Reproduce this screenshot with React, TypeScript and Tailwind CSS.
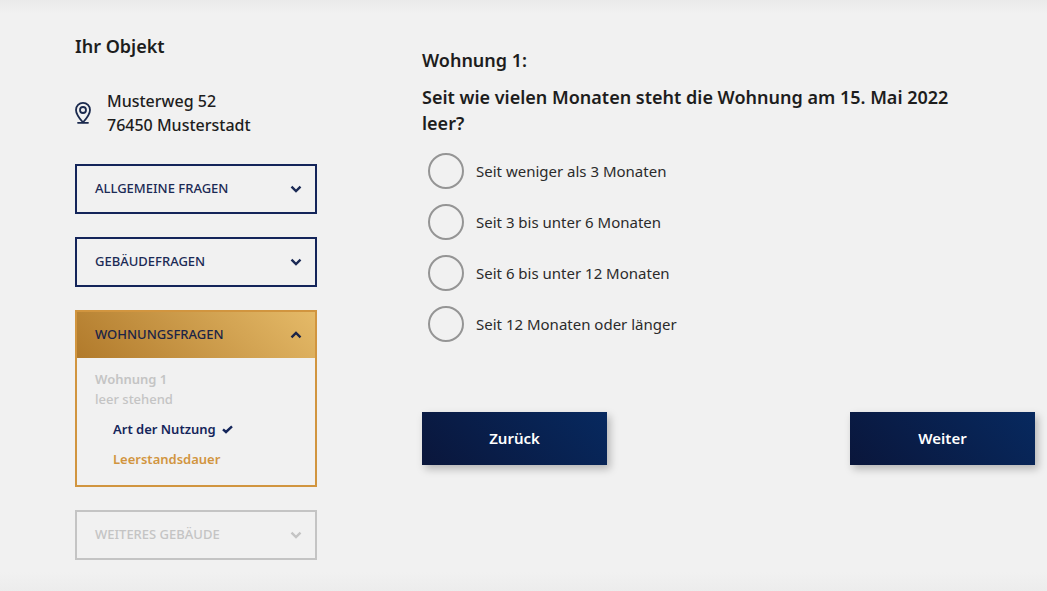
import { useState } from 'react';

const sections = [
  { id: 'allgemein', title: 'Allgemeine Fragen' },
  { id: 'gebaeude', title: 'Gebäudefragen' },
  { id: 'wohnung', title: 'Wohnungsfragen' },
  { id: 'weiteres', title: 'Weiteres Gebäude', disabled: true },
];

const options = [
  { value: '0-3', label: 'Seit weniger als 3 Monaten' },
  { value: '3-6', label: 'Seit 3 bis unter 6 Monaten' },
  { value: '6-12', label: 'Seit 6 bis unter 12 Monaten' },
  { value: '12+', label: 'Seit 12 Monaten oder länger' },
];

function Chevron({ up }: { up?: boolean }) {
  return (
    <svg width="12" height="8" viewBox="0 0 12 8" fill="none" stroke="currentColor" strokeWidth="2.4" aria-hidden="true">
      <path d={up ? 'M1.5 6.3 6 1.9l4.5 4.4' : 'M1.5 1.7 6 6.1l4.5-4.4'} />
    </svg>
  );
}

function PinIcon() {
  return (
    <svg width="16" height="22" viewBox="0 0 16 22" fill="none" stroke="#1b2a4e" strokeWidth="1.8" strokeLinecap="round" strokeLinejoin="round" aria-hidden="true">
      <path d="M8 20.4C5.2 17.200 1 12.600 1 7.900a7 7 0 0 1 14 0c0 4.700-4.200 9.300-7 12.500Z" />
      <circle cx="8" cy="8" r="3" />
      <path d="M3 20.800h10" />
    </svg>
  );
}

function CheckIcon() {
  return (
    <svg width="11" height="9" viewBox="0 0 11 9" fill="none" stroke="currentColor" strokeWidth="2.4" aria-hidden="true">
      <path d="M1 4.300 4 7 10 1.400" />
    </svg>
  );
}

function NavButton({ label }: { label: string }) {
  return (
    <button
      type="button"
      className="h-[53px] w-[185px] bg-[linear-gradient(45deg,#0a163b,#07295f)] text-[15px] font-semibold text-white shadow-[3px_4px_8px_rgba(0,0,0,0.25)]"
    >
      {label}
    </button>
  );
}

export default function App() {
  const [open, setOpen] = useState('wohnung');
  const [answer, setAnswer] = useState('');

  return (
    <div className="flex min-h-screen gap-[105px] bg-[linear-gradient(to_bottom,#eaeaea,#f1f1f1_14px,#f1f1f1_calc(100%-20px),#ececec)] pr-3 pb-8 pl-[75px] font-['Noto_Sans',sans-serif] text-[#1d1d1d]">
      <aside className="w-[242px] shrink-0 pt-8">
        <h2 className="text-[18px] leading-7 font-semibold">Ihr Objekt</h2>

        <div className="mt-[29px] flex items-center gap-4">
          <PinIcon />
          <address className="text-[16px] leading-6 font-medium not-italic">
            Musterweg 52
            <br />
            76450 Musterstadt
          </address>
        </div>

        <nav className="mt-[27px] flex flex-col gap-[23px]">
          {sections.map((section) => {
            const active = section.id === open;
            return (
              <div
                key={section.id}
                className={`border-2 ${active ? 'border-[#d1953f]' : section.disabled ? 'border-[#c4c4c4]' : 'border-[#14255a]'}`}
              >
                <button
                  type="button"
                  disabled={section.disabled}
                  aria-expanded={active}
                  onClick={() => setOpen(active ? '' : section.id)}
                  className={`flex h-[46px] w-full items-center justify-between pr-[13px] pl-[18px] text-[13px] font-medium uppercase ${
                    active
                      ? 'bg-[linear-gradient(45deg,#b17a2b,#e5ba68)] text-[#1b2447]'
                      : section.disabled
                        ? 'text-[#c4c4c4]'
                        : 'text-[#1b2a55]'
                  }`}
                >
                  {section.title}
                  <Chevron up={active} />
                </button>

                {active && section.id === 'wohnung' && (
                  <div className="px-[18px] pt-[11px] pb-4 text-[13px] leading-5">
                    <p className="font-medium text-[#c4c4c4]">
                      <span className="font-semibold">Wohnung 1</span>
                      <br />
                      leer stehend
                    </p>
                    <ul className="mt-[10px] flex flex-col gap-[10px] pl-[18px] font-semibold">
                      <li>
                        <a href="#nutzung" className="flex items-center gap-1.5 text-[#14255a]">
                          Art der Nutzung
                          <CheckIcon />
                        </a>
                      </li>
                      <li>
                        <a href="#leerstand" aria-current="step" className="block text-[#d1953f]">
                          Leerstandsdauer
                        </a>
                      </li>
                    </ul>
                  </div>
                )}
              </div>
            );
          })}
        </nav>
      </aside>

      <main className="min-w-0 flex-1 pt-[47px]">
        <h1 className="text-[18px] leading-[26px] font-semibold">Wohnung 1:</h1>

        <fieldset className="mt-[11px]">
          <legend className="max-w-[560px] text-[18px] leading-[26px] font-semibold">
            Seit wie vielen Monaten steht die Wohnung am 15. Mai 2022 leer?
          </legend>
          <div className="mt-[17px] flex flex-col gap-[15px] pl-1.5">
            {options.map((option) => (
              <label key={option.value} className="flex items-center gap-3 text-[15px] text-[#2b2b2b]">
                <input
                  type="radio"
                  name="leerstand"
                  value={option.value}
                  checked={answer === option.value}
                  onChange={() => setAnswer(option.value)}
                  className="size-9 appearance-none rounded-full border-2 border-[#959595] checked:border-[10px] checked:border-[#14255a]"
                />
                {option.label}
              </label>
            ))}
          </div>
        </fieldset>

        <div className="mt-[70px] flex justify-between">
          <NavButton label="Zurück" />
          <NavButton label="Weiter" />
        </div>
      </main>
    </div>
  );
}
